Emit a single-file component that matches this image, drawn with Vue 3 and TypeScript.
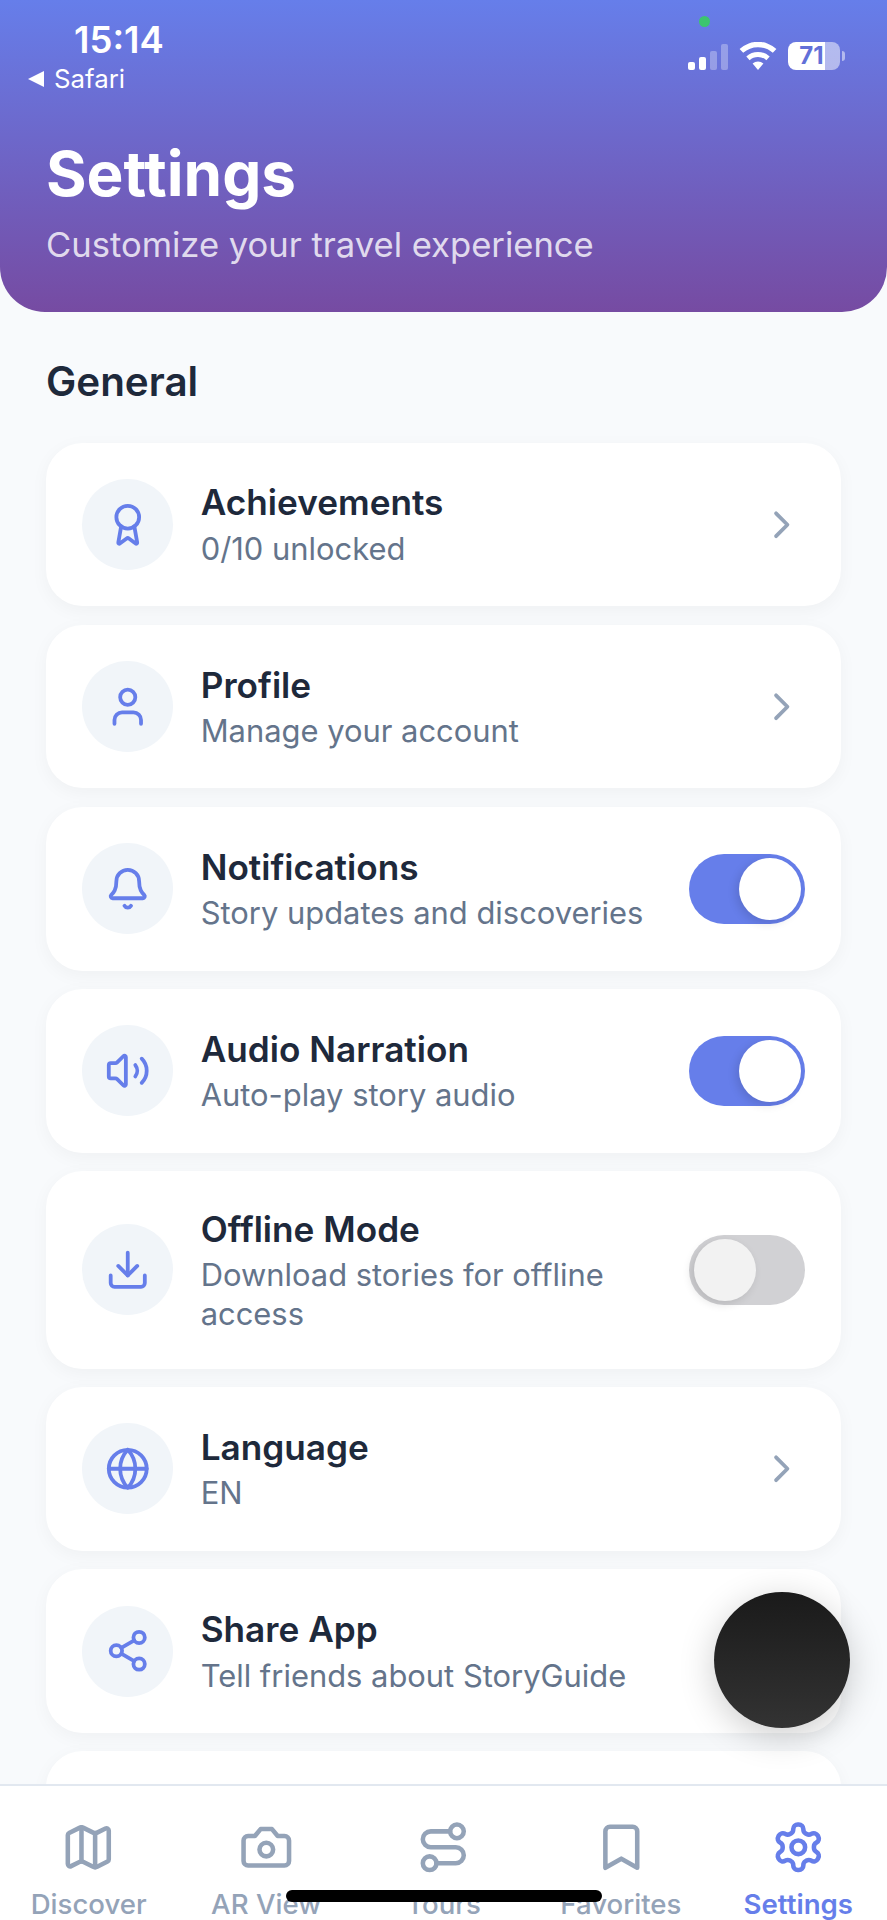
<script setup lang="ts">
interface Icon {
  paths: string[]
  circles?: [number, number, number][]
}

interface Row {
  title: string
  sub: string
  icon: Icon
  toggle?: boolean
}

const rows: Row[] = [
  {
    title: 'Achievements',
    sub: '0/10 unlocked',
    icon: {
      paths: ['m15.477 12.89 1.515 8.526a.5.5 0 0 1-.81.47l-3.58-2.687a1 1 0 0 0-1.197 0l-3.586 2.686a.5.5 0 0 1-.81-.469l1.514-8.526'],
      circles: [[12, 8, 6]]
    }
  },
  {
    title: 'Profile',
    sub: 'Manage your account',
    icon: {
      paths: ['M19 21v-2a4 4 0 0 0-4-4H9a4 4 0 0 0-4 4v2'],
      circles: [[12, 7, 4]]
    }
  },
  {
    title: 'Notifications',
    sub: 'Story updates and discoveries',
    toggle: true,
    icon: {
      paths: [
        'M10.268 21a2 2 0 0 0 3.464 0',
        'M3.262 15.326A1 1 0 0 0 4 17h16a1 1 0 0 0 .74-1.673C19.41 13.956 18 12.499 18 8A6 6 0 0 0 6 8c0 4.499-1.411 5.956-2.738 7.326'
      ]
    }
  },
  {
    title: 'Audio Narration',
    sub: 'Auto-play story audio',
    toggle: true,
    icon: {
      paths: [
        'M11 4.702a.705.705 0 0 0-1.203-.498L6.413 7.587A1.4 1.4 0 0 1 5.416 8H3a1 1 0 0 0-1 1v6a1 1 0 0 0 1 1h2.416a1.4 1.4 0 0 1 .997.413l3.383 3.384A.705.705 0 0 0 11 19.298z',
        'M16 9a5 5 0 0 1 0 6',
        'M19.364 18.364a9 9 0 0 0 0-12.728'
      ]
    }
  },
  {
    title: 'Offline Mode',
    sub: 'Download stories for offline access',
    toggle: false,
    icon: {
      paths: ['M21 15v4a2 2 0 0 1-2 2H5a2 2 0 0 1-2-2v-4', 'm7 10 5 5 5-5', 'M12 15V3']
    }
  },
  {
    title: 'Language',
    sub: 'EN',
    icon: {
      paths: ['M12 2a14.5 14.5 0 0 0 0 20 14.5 14.5 0 0 0 0-20', 'M2 12h20'],
      circles: [[12, 12, 10]]
    }
  },
  {
    title: 'Share App',
    sub: 'Tell friends about StoryGuide',
    icon: {
      paths: ['m8.59 13.51 6.83 3.98', 'M15.41 6.51l-6.82 3.98'],
      circles: [[18, 5, 3], [6, 12, 3], [18, 19, 3]]
    }
  }
]

const tabs: { label: string; icon: Icon; active?: boolean }[] = [
  {
    label: 'Discover',
    icon: {
      paths: [
        'M14.106 5.553a2 2 0 0 0 1.788 0l3.659-1.83A1 1 0 0 1 21 4.619v12.764a1 1 0 0 1-.553.894l-4.553 2.277a2 2 0 0 1-1.788 0l-4.212-2.106a2 2 0 0 0-1.788 0l-3.659 1.83A1 1 0 0 1 3 19.381V6.618a1 1 0 0 1 .553-.894l4.553-2.277a2 2 0 0 1 1.788 0z',
        'M15 5.764v15',
        'M9 3.236v15'
      ]
    }
  },
  {
    label: 'AR View',
    icon: {
      paths: ['M14.5 4h-5L7 7H4a2 2 0 0 0-2 2v9a2 2 0 0 0 2 2h16a2 2 0 0 0 2-2V9a2 2 0 0 0-2-2h-3l-2.5-3z'],
      circles: [[12, 13, 3]]
    }
  },
  {
    label: 'Tours',
    icon: {
      paths: ['M9 19h8.5a3.5 3.5 0 0 0 0-7h-11a3.5 3.5 0 0 1 0-7H15'],
      circles: [[6, 19, 3], [18, 5, 3]]
    }
  },
  {
    label: 'Favorites',
    icon: {
      paths: ['m19 21-7-4-7 4V5a2 2 0 0 1 2-2h10a2 2 0 0 1 2 2v16z']
    }
  },
  {
    label: 'Settings',
    active: true,
    icon: {
      paths: ['M12.22 2h-.44a2 2 0 0 0-2 2v.18a2 2 0 0 1-1 1.73l-.43.25a2 2 0 0 1-2 0l-.15-.08a2 2 0 0 0-2.73.73l-.22.38a2 2 0 0 0 .73 2.73l.15.1a2 2 0 0 1 1 1.72v.51a2 2 0 0 1-1 1.74l-.15.09a2 2 0 0 0-.73 2.73l.22.38a2 2 0 0 0 2.73.73l.15-.08a2 2 0 0 1 2 0l.43.25a2 2 0 0 1 1 1.73V20a2 2 0 0 0 2 2h.44a2 2 0 0 0 2-2v-.18a2 2 0 0 1 1-1.73l.43-.25a2 2 0 0 1 2 0l.15.08a2 2 0 0 0 2.73-.73l.22-.39a2 2 0 0 0-.73-2.73l-.15-.08a2 2 0 0 1-1-1.74v-.5a2 2 0 0 1 1-1.74l.15-.09a2 2 0 0 0 .73-2.73l-.22-.38a2 2 0 0 0-2.73-.73l-.15.08a2 2 0 0 1-2 0l-.43-.25a2 2 0 0 1-1-1.73V4a2 2 0 0 0-2-2z'],
      circles: [[12, 12, 3]]
    }
  }
]
</script>

<template>
  <div class="page">
    <header class="header">
      <div class="status">
        <div class="status-left">
          <span class="time">15:14</span>
          <span class="back"><i class="back-arrow"></i>Safari</span>
        </div>
        <i class="green-dot"></i>
        <div class="status-right">
          <div class="signal">
            <i class="bar b1"></i>
            <i class="bar b2"></i>
            <i class="bar b3 dim"></i>
            <i class="bar b4 dim"></i>
          </div>
          <svg class="wifi" viewBox="0 0 38 28">
            <path d="M19 28 13.6 21.6a8 8 0 0 1 10.8 0Z" fill="#fff" />
            <path d="M10.6 18.2 7.3 14.4a17.5 17.5 0 0 1 23.4 0l-3.3 3.8a12.4 12.4 0 0 0-16.8 0Z" fill="#fff" />
            <path d="M4.2 10.8.6 6.9a27.4 27.4 0 0 1 36.8 0l-3.6 3.9a22.2 22.2 0 0 0-29.6 0Z" fill="#fff" />
          </svg>
          <div class="battery">
            <div class="battery-body">
              <span class="battery-text">71</span>
            </div>
            <i class="battery-tip"></i>
          </div>
        </div>
      </div>
      <h1 class="heading">Settings</h1>
      <p class="tagline">Customize your travel experience</p>
    </header>

    <main class="content">
      <h2 class="section-title">General</h2>
      <div class="list">
        <div v-for="row in rows" :key="row.title" class="card">
          <div class="icon-circle">
            <svg class="row-icon" viewBox="0 0 24 24">
              <path v-for="d in row.icon.paths" :key="d" :d="d" />
              <circle v-for="c in row.icon.circles" :key="c[0] + '-' + c[1]" :cx="c[0]" :cy="c[1]" :r="c[2]" />
            </svg>
          </div>
          <div class="row-text">
            <div class="row-title">{{ row.title }}</div>
            <div class="row-sub">{{ row.sub }}</div>
          </div>
          <div v-if="row.toggle !== undefined" class="switch" :class="{ on: row.toggle }">
            <i class="thumb"></i>
          </div>
          <svg v-else class="chevron" viewBox="0 0 24 24">
            <path d="m9 18 6-6-6-6" />
          </svg>
        </div>
        <div class="card"></div>
      </div>
    </main>

    <nav class="tabbar">
      <div v-for="tab in tabs" :key="tab.label" class="tab" :class="{ active: tab.active }">
        <svg class="tab-icon" viewBox="0 0 24 24">
          <path v-for="d in tab.icon.paths" :key="d" :d="d" />
          <circle v-for="c in tab.icon.circles" :key="c[0] + '-' + c[1]" :cx="c[0]" :cy="c[1]" :r="c[2]" />
        </svg>
        <span class="tab-label">{{ tab.label }}</span>
      </div>
    </nav>

    <div class="float-button"></div>
    <div class="home-indicator"></div>
  </div>
</template>

<style scoped>
.page {
  position: relative;
  width: 887px;
  height: 1920px;
  overflow: hidden;
  display: flex;
  flex-direction: column;
  background: #f8fafc;
  font-family: Inter, 'Liberation Sans', sans-serif;
}

.header {
  position: relative;
  flex: none;
  box-sizing: border-box;
  height: 312px;
  padding: 136px 46px 0;
  background: linear-gradient(180deg, #667eea 0%, #764ba2 100%);
  border-radius: 0 0 45px 45px;
  color: #fff;
}

.status {
  position: absolute;
  inset: 0 0 auto 0;
  height: 100px;
}

.status-left {
  position: absolute;
  left: 28px;
  top: 20px;
  display: flex;
  flex-direction: column;
}

.time {
  margin-left: 46px;
  font-size: 36.5px;
  line-height: 40px;
  font-weight: 600;
}

.back {
  display: flex;
  align-items: center;
  margin-top: 4px;
  font-size: 25.8px;
  line-height: 30px;
  font-weight: 400;
}

.back-arrow {
  width: 0;
  height: 0;
  margin-right: 10px;
  border-top: 8px solid transparent;
  border-bottom: 8px solid transparent;
  border-right: 16px solid #fff;
}

.green-dot {
  position: absolute;
  left: 699px;
  top: 16px;
  width: 11px;
  height: 11px;
  border-radius: 50%;
  background: #3cc46f;
}

.status-right {
  position: absolute;
  left: 688px;
  top: 42px;
  display: flex;
  align-items: flex-end;
}

.signal {
  display: flex;
  align-items: flex-end;
  gap: 4px;
  height: 26px;
}

.bar {
  width: 7px;
  border-radius: 2px;
  background: #fff;
}

.bar.dim {
  opacity: 0.3;
}

.b1 { height: 8px; }
.b2 { height: 13px; }
.b3 { height: 19px; }
.b4 { height: 26px; }

.wifi {
  width: 38px;
  height: 28px;
  margin-left: 11px;
}

.battery {
  display: flex;
  align-items: center;
  margin-left: 11px;
}

.battery-body {
  width: 52px;
  height: 28px;
  border-radius: 8px;
  background: linear-gradient(90deg, #fff 0 71%, rgba(255, 255, 255, 0.5) 71% 100%);
  text-align: center;
}

.battery-text {
  font-size: 24px;
  line-height: 28px;
  font-weight: 700;
  color: #6270d8;
  margin-right: 5px;
}

.battery-tip {
  width: 3px;
  height: 10px;
  margin-left: 2px;
  border-radius: 0 3px 3px 0;
  background: rgba(255, 255, 255, 0.5);
}

.heading {
  margin: 0;
  font-size: 62px;
  line-height: 75px;
  font-weight: 700;
}

.tagline {
  margin: 11.5px 0 0;
  font-size: 34.6px;
  line-height: 42px;
  color: rgba(255, 255, 255, 0.8);
}

.content {
  flex: 1;
  min-height: 0;
  overflow: hidden;
  padding: 48px 46px 0;
}

.section-title {
  margin: 0 0 38.5px;
  font-size: 40.4px;
  line-height: 44px;
  font-weight: 600;
  color: #1e293b;
}

.list {
  display: flex;
  flex-direction: column;
  gap: 18.4px;
}

.card {
  flex: none;
  display: flex;
  align-items: center;
  min-height: 163.8px;
  box-sizing: border-box;
  padding: 36.4px;
  background: #fff;
  border-radius: 36.4px;
  box-shadow: 0 4.5px 18px rgba(0, 0, 0, 0.04);
}

.icon-circle {
  flex: none;
  display: flex;
  align-items: center;
  justify-content: center;
  width: 91px;
  height: 91px;
  margin-right: 27.3px;
  border-radius: 50%;
  background: #f1f5f9;
}

.row-icon {
  width: 45.5px;
  height: 45.5px;
  fill: none;
  stroke: #667eea;
  stroke-width: 2;
  stroke-linecap: round;
  stroke-linejoin: round;
}

.row-text {
  flex: 1;
  min-width: 0;
  padding-right: 27px;
}

.row-title {
  font-size: 35.2px;
  line-height: 42.5px;
  font-weight: 600;
  color: #1e293b;
}

.row-sub {
  margin: 6px 0 -1px;
  font-size: 30.9px;
  line-height: 38.5px;
  color: #64748b;
}

.chevron {
  flex: none;
  width: 45.5px;
  height: 45.5px;
  fill: none;
  stroke: #94a3b8;
  stroke-width: 2;
  stroke-linecap: round;
  stroke-linejoin: round;
}

.switch {
  flex: none;
  position: relative;
  width: 116px;
  height: 70.5px;
  border-radius: 36px;
  background: #d1d1d4;
}

.switch.on {
  background: #667eea;
}

.thumb {
  position: absolute;
  top: 4.2px;
  left: 5px;
  width: 62px;
  height: 62px;
  border-radius: 50%;
  background: #f2f2f2;
  box-shadow: -3px 3px 10px rgba(0, 0, 0, 0.12);
}

.switch.on .thumb {
  left: 50px;
  background: #fff;
}

.tabbar {
  flex: none;
  display: grid;
  grid-template-columns: repeat(5, 1fr);
  box-sizing: border-box;
  height: 136px;
  padding-top: 34px;
  background: #fff;
  border-top: 2px solid #e2e8f0;
}

.tab {
  display: flex;
  flex-direction: column;
  align-items: center;
  color: #94a3b8;
}

.tab.active {
  color: #667eea;
  font-weight: 600;
}

.tab-icon {
  flex: none;
  width: 54.6px;
  height: 54.6px;
  fill: none;
  stroke: currentColor;
  stroke-width: 2;
  stroke-linecap: round;
  stroke-linejoin: round;
}

.tab-label {
  margin-top: 13px;
  font-size: 27.6px;
  line-height: 32px;
  font-weight: inherit;
  white-space: nowrap;
}

.tab:not(.active) .tab-label {
  font-weight: 500;
}

.float-button {
  position: absolute;
  left: 714px;
  top: 1592px;
  width: 136px;
  height: 136px;
  border-radius: 50%;
  background: linear-gradient(180deg, #1a1a1a 0%, #333 100%);
  box-shadow: 0 8px 36px rgba(0, 0, 0, 0.2);
}

.home-indicator {
  position: absolute;
  left: 286px;
  top: 1890px;
  width: 316px;
  height: 12px;
  border-radius: 6px;
  background: #000;
}
</style>
